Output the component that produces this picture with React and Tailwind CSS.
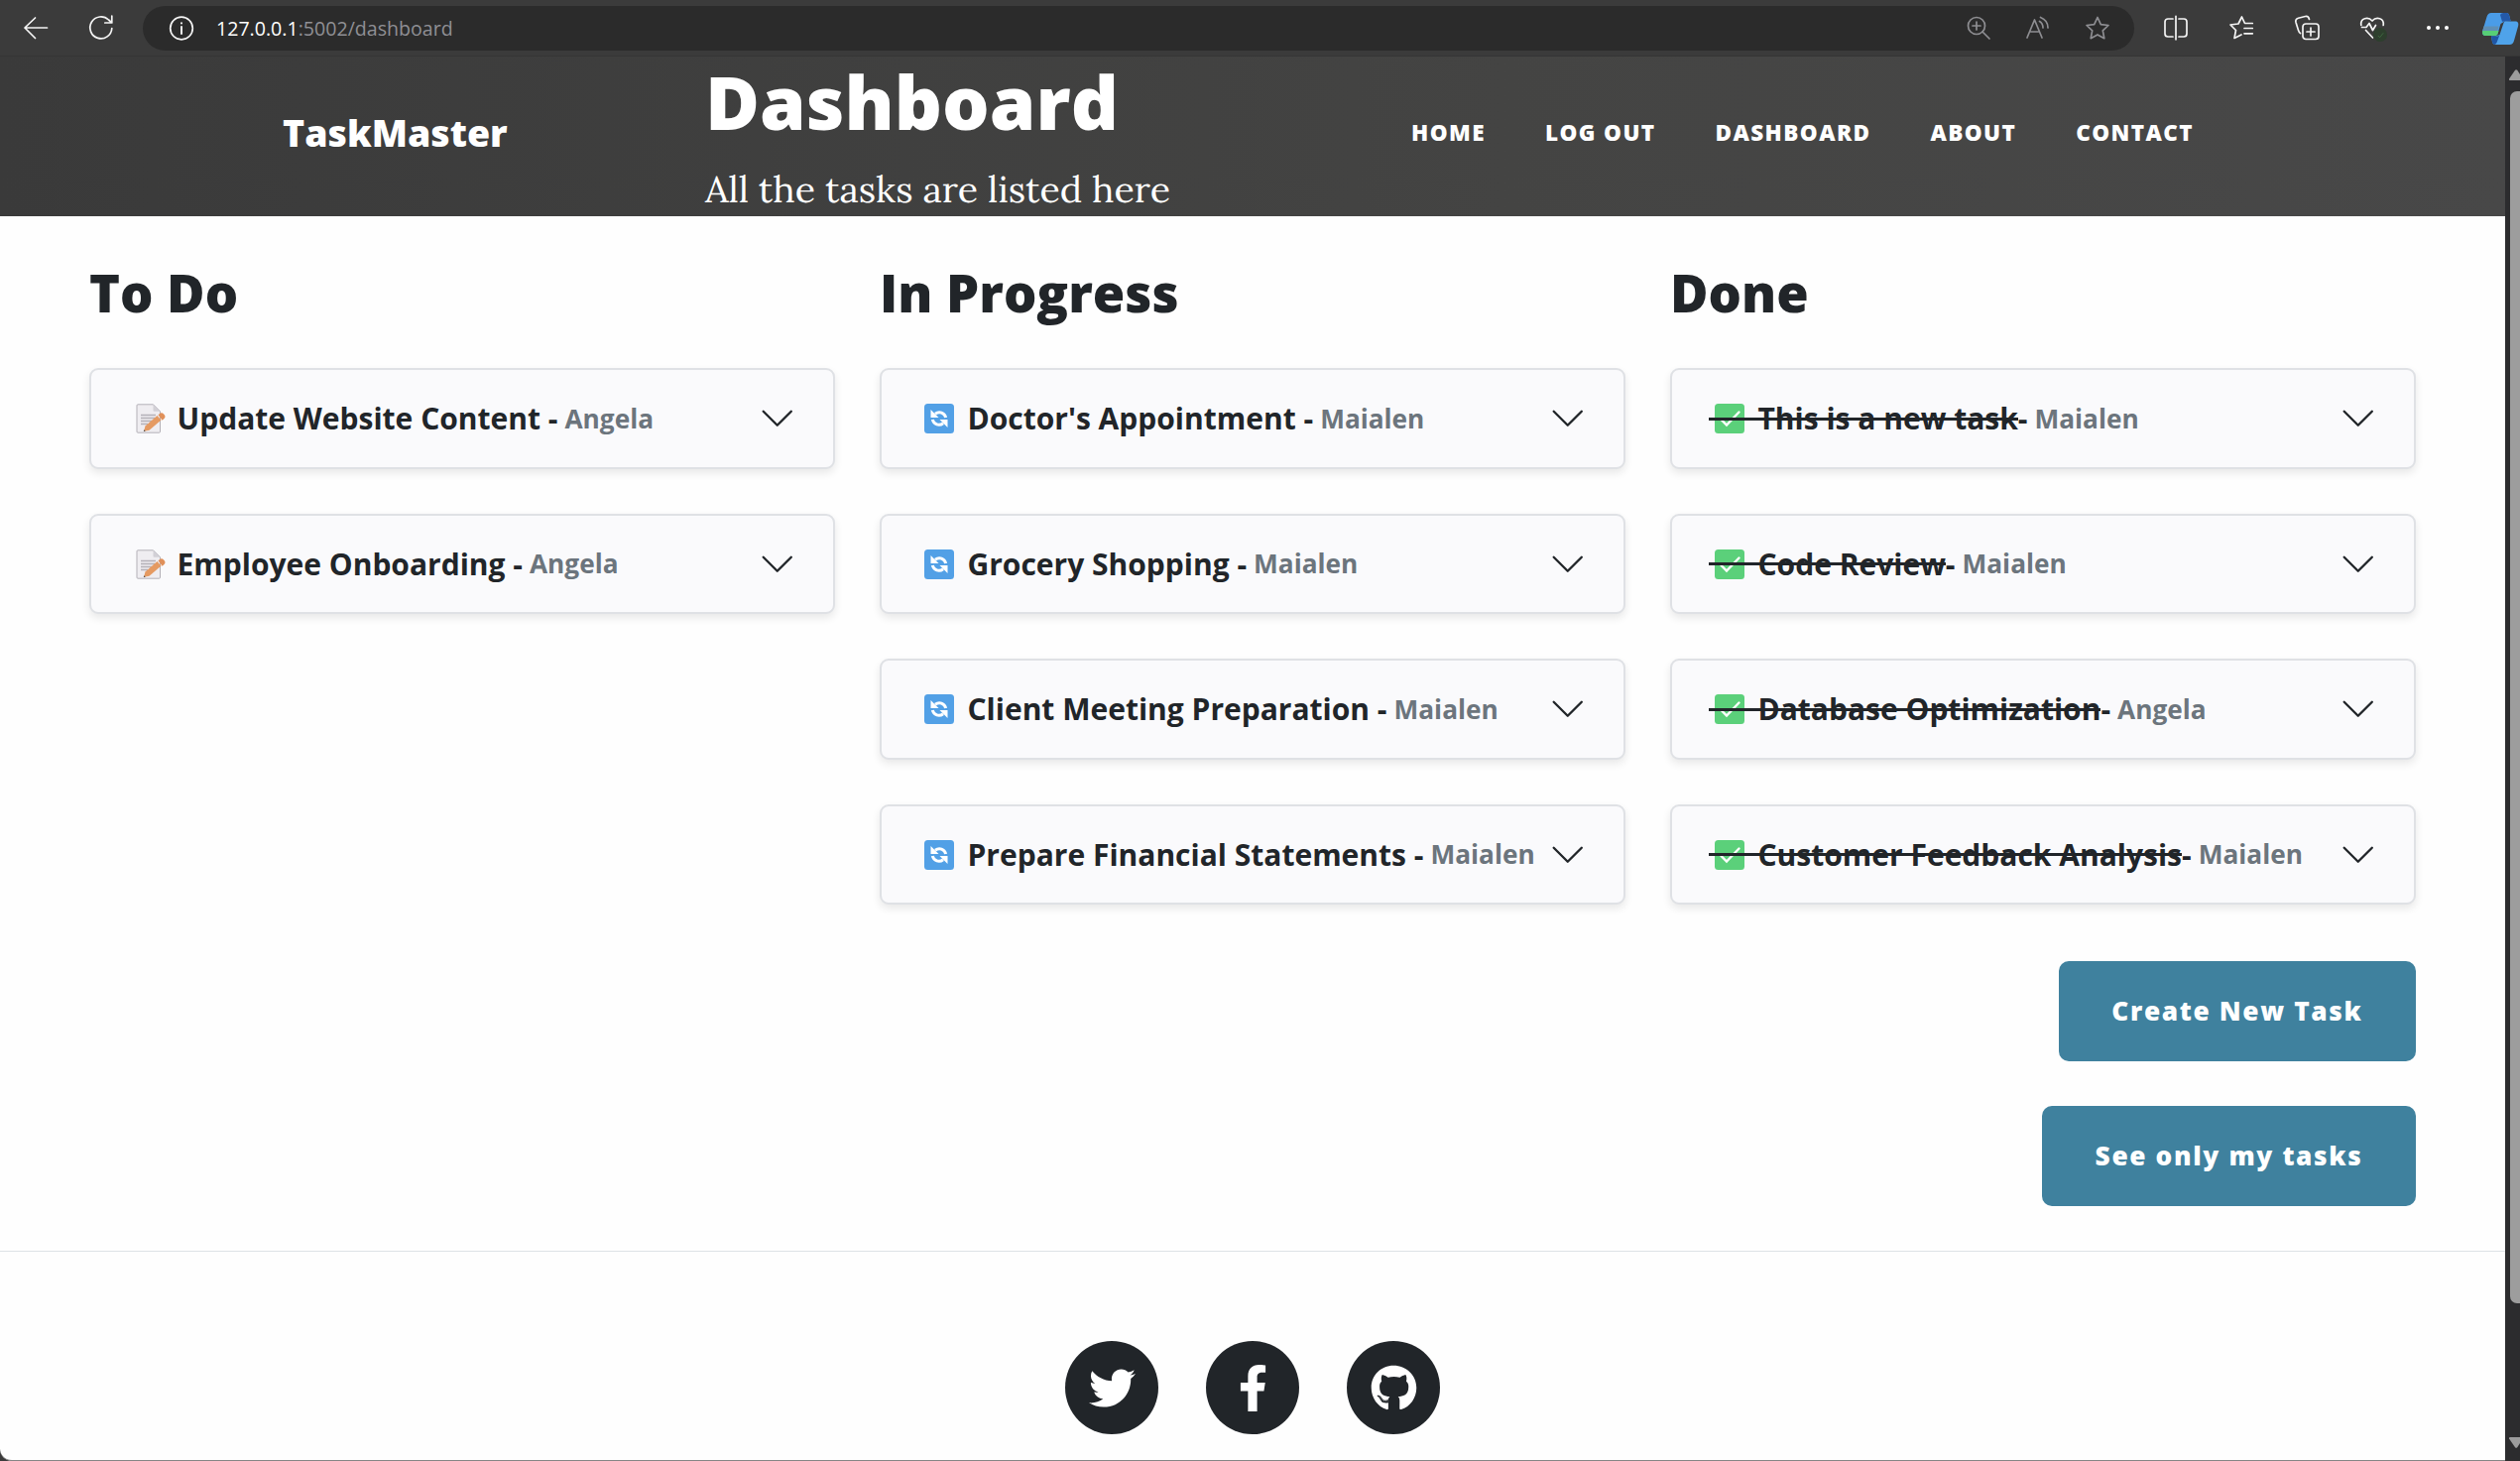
import React from "react";
import { FaTwitter, FaFacebookF, FaGithub } from "react-icons/fa";

const columns = [
  {
    title: "To Do",
    kind: "note",
    tasks: [
      ["Update Website Content", "Angela"],
      ["Employee Onboarding", "Angela"],
    ],
  },
  {
    title: "In Progress",
    kind: "cycle",
    tasks: [
      ["Doctor's Appointment", "Maialen"],
      ["Grocery Shopping", "Maialen"],
      ["Client Meeting Preparation", "Maialen"],
      ["Prepare Financial Statements", "Maialen"],
    ],
  },
  {
    title: "Done",
    kind: "check",
    tasks: [
      ["This is a new task", "Maialen"],
      ["Code Review", "Maialen"],
      ["Database Optimization", "Angela"],
      ["Customer Feedback Analysis", "Maialen"],
    ],
  },
];

function Line({ children, className = "size-6", width = 1.7 }) {
  return (
    <svg
      viewBox="0 0 24 24"
      className={"shrink-0 overflow-visible " + className}
      fill="none"
      stroke="currentColor"
      strokeWidth={width}
      strokeLinecap="round"
      strokeLinejoin="round"
    >
      {children}
    </svg>
  );
}

function NoteIcon() {
  return (
    <svg viewBox="-2 0 30 30" className="size-[30px] overflow-visible">
      <path d="M2 .8h15.500l7 7v20.400a1 1 0 0 1-1 1H2a1 1 0 0 1-1-1V1.800a1 1 0 0 1 1-1z" fill="#efedf1" stroke="#b4b1b8" strokeWidth="1" />
      <path d="M17.500.8v6a1 1 0 0 0 1 1h6z" fill="#d2d0d6" />
      <path d="M5 11.500h15M5 14.500h14M5 17.500h11M5 20.500h7" stroke="#b4b1b8" strokeWidth="1.3" />
      <path d="M9.500 22.500 21.500 12l4 4.500-12 10.200-5.500 1z" fill="#e59a62" />
      <path d="m22.500 11.200 1.300-1a3 3 0 0 1 4.300.3l.5.6a3 3 0 0 1-.3 4.200l-1.700 1.400z" fill="#e0905a" />
      <path d="m8.300 26.300-.5 1.700 1.900-.3z" fill="#444" />
    </svg>
  );
}

function CycleIcon() {
  return (
    <svg viewBox="0 0 30 30" className="size-[30px]">
      <rect width="30" height="30" rx="3.500" fill="#52a0e6" />
      <g fill="none" stroke="#fff" strokeWidth="3">
        <path d="M11 10.300C15 7.200 20.500 9 21.700 14" />
        <path d="M19 19.700C15 22.800 9.500 21 8.300 16" />
      </g>
      <path d="M6.500 6v8h8zM23.500 24v-8h-8z" fill="#fff" />
    </svg>
  );
}

function CheckIcon() {
  return (
    <svg viewBox="0 0 30 30" className="size-[30px]">
      <rect width="30" height="30" rx="3.500" fill="#5bd07a" />
      <path d="m6.500 16 5.500 5.500L24.500 8.500" fill="none" stroke="#fff" strokeWidth="2.400" strokeLinecap="round" />
    </svg>
  );
}

const icons = { note: NoteIcon, cycle: CycleIcon, check: CheckIcon };

function TaskCard({ kind, title, owner }) {
  const Icon = icons[kind];
  const done = kind === "check";
  return (
    <div className="flex h-[101.500px] items-center justify-between rounded-[9px] border-2 border-[#dfe1e5] bg-[#fafafc] px-[37px] shadow-[0_4px_8px_rgba(0,0,0,0.09)]">
      <div className="flex items-center whitespace-nowrap pb-[0.400px] font-bold text-[#212529]">
        <div className="relative flex items-center text-[30px] leading-[45px]">
          <span className="mr-[8.500px] flex w-[41px] justify-center pt-px">
            <Icon />
          </span>
          <span>{title}</span>
          {done && <span className="absolute inset-x-0 top-[21.500px] h-[3px] bg-[#212529]" />}
        </div>
        <span className="text-[30px] leading-[45px]">{done ? "-" : "\u00a0-"}</span>
        <span className="ml-[7px] text-[26.250px] leading-[40px] text-[#6c757d]">{owner}</span>
      </div>
      <svg viewBox="0 0 16 16" className="mr-[0.500px] size-[37.500px] shrink-0" fill="none" stroke="#212529" strokeLinecap="round" strokeLinejoin="round">
        <path d="m2 5 6 6 6-6" />
      </svg>
    </div>
  );
}

function Copilot() {
  return (
    <svg viewBox="0 0 37 33" className="h-[33px] w-[37px] shrink-0">
      <path d="M9 0h15.500c1.500 0 2.300 1.200 2.800 3l1.200 5-6 .5-4 2.500-3 10c-.6 1.500-1.500 2-3 2H3c-2.500 0-3.500-2-2.700-5L4.500 4C5.300 1.500 6.800 0 9 0z" fill="#4a9ce8" />
      <path d="M18 2c.7-1.300 1.800-2 3.300-2h3.200c1.500 0 2.300 1.200 2.800 3l1.300 5.300-8.600.5z" fill="#2459a8" />
      <path d="m1.500 13.500-1.200 4.500h15l1.300-4.500z" fill="#5f8fb5" />
      <path d="M.3 18C-.500 21 .5 23 3 23h9.500c1.500 0 2.400-.5 3-2l1-3z" fill="#57cf76" />
      <path d="M28 8.500h5c3 0 3.800 2 3.200 4.500L32 28c-.8 2.800-2 4-4.500 4H13c-1.500 0-2.500-1-3-2.800L9 23.500h4l4.500-1.500 4-12c.5-1.200 1.500-1.500 2.500-1.500z" fill="#4fa3ea" />
      <path d="M9 23.500h5.500c1.200 0 2-.3 3-1.500l-3 8c-.7 1.300-1.500 2-2.500 2-1-.3-1.600-1.300-2-2.800z" fill="#1f56a5" />
    </svg>
  );
}

function BrowserBar() {
  return (
    <div className="flex h-[57px] shrink-0 items-center border-b border-[#353535] bg-[#3b3b3b] text-[#f4f4f4]">
      <Line className="ml-6 size-6">
        <path d="M1 12h22.500M11.500 2 1 12l10.500 10.500" />
      </Line>
      <Line className="ml-[42px] size-6">
        <path d="M22.800 12.500A11 11 0 1 1 19.500 4l3 2.700M22.800 0v7h-7" />
      </Line>
      <div className="ml-[30px] flex h-[45px] w-[2008px] items-center rounded-full bg-[#2b2b2b] pl-[27px] pr-[25px]">
        <Line>
          <circle cx="12" cy="12.500" r="11.300" />
          <path d="M12 11v7M12 7.300v.2" strokeWidth="2" />
        </Line>
        <span className="ml-[23px] pt-px font-['Open_Sans',sans-serif] text-[19.600px] leading-6 text-[#8f8f94]">
          <span className="text-white">127.0.0.1</span>:5002/dashboard
        </span>
        <div className="ml-auto flex items-center gap-9 text-[#8e8e92]">
          <Line>
            <circle cx="10" cy="10" r="8.500" />
            <path d="M10 6v8M6 10h8M16 16l7 7" />
          </Line>
          <Line>
            <path d="M1 22 8.500 4 16 22M4 16h9M13.500 5.500c2.500 1.500 3.500 4 3.500 6.500M14.500 1.500C19.500 3.500 22 7.500 22 12" />
          </Line>
          <Line>
            <path d="m12 1.500 3.300 7.100 7.700.9-5.700 5.300 1.500 7.900-6.800-3.800-6.800 3.800 1.500-7.900L1 9.500l7.700-.9z" />
          </Line>
        </div>
      </div>
      <div className="ml-[30px] flex items-center gap-[42px]">
        <Line>
          <path d="M9 3H4a3 3 0 0 0-3 3v12a3 3 0 0 0 3 3h5M15 3h5a3 3 0 0 1 3 3v12a3 3 0 0 1-3 3h-5M12 .3v23.500" />
        </Line>
        <Line>
          <path d="M23.300 12.500h-8.300M23.300 7.500h-7.800L12.500 1 9 8l-8 1 5.500 5.500L5 22.500l7-3.500M23.300 17.800h-8.300" />
        </Line>
        <Line>
          <rect x="8" y="8" width="16" height="15.500" rx="3" />
          <path d="M16 12v8M12 16h8M5.500 17.500C4.500 17 4 16 3.500 14.500L1 6.500C.300 4 1.500 3 3.500 2.300l7-1.800c2.500-.5 3.500.5 4 3" />
        </Line>
        <div className="relative">
          <Line>
            <path d="M.8 9.500C-.300 2 8 .500 12 5c4-4.500 12.300-3 11.200 4.500M1.500 11.500h4.500l3-4 3.500 7 3-5M5.500 14.500l7 7.500" />
          </Line>
          <span className="absolute left-[13px] top-[12px] flex size-[14px] items-center justify-center rounded-full bg-[#2d3f2d]">
            <svg viewBox="0 0 10 10" className="size-[9px]" fill="none" stroke="#3f6a40">
              <path d="m2 5.500 2 2 4-5" />
            </svg>
          </span>
        </div>
        <div className="flex w-6 items-center justify-center gap-[5px]">
          <span className="size-1 shrink-0 rounded-full bg-white" />
          <span className="size-1 shrink-0 rounded-full bg-white" />
          <span className="size-1 shrink-0 rounded-full bg-white" />
        </div>
      </div>
      <div className="ml-[33px] pt-[2px]">
        <Copilot />
      </div>
    </div>
  );
}

function Header() {
  return (
    <header className="flex h-[161px] items-start bg-linear-to-r from-[#3a3a3a] via-[#444443] via-60% to-[#484848] text-white">
      <div className="ml-[285px] mt-[51px] w-[426px] text-[37.500px] font-extrabold leading-[52px]">TaskMaster</div>
      <div className="w-[712px]">
        <h1 className="text-[75px] font-extrabold leading-[91px]">Dashboard</h1>
        <p className="mt-[15px] font-['Lora',serif] text-[37.500px] leading-[55px]">All the tasks are listed here</p>
      </div>
      <nav className="mt-[60px] flex gap-[60px] whitespace-nowrap text-[22.500px] font-extrabold leading-[34px] tracking-[0.0625em]">
        <span>HOME</span>
        <span>LOG OUT</span>
        <span>DASHBOARD</span>
        <span>ABOUT</span>
        <span>CONTACT</span>
      </nav>
    </header>
  );
}

function SocialLink({ children }) {
  return <span className="flex size-[94px] items-center justify-center rounded-full bg-[#212529] text-[47px] text-white">{children}</span>;
}

export default function App() {
  return (
    <div className="flex h-[1473px] w-[2541px] flex-col overflow-hidden bg-[#3b3b3b] font-['Open_Sans',sans-serif]">
      <BrowserBar />
      <div className="flex min-h-0 flex-1">
        <div className="flex w-[2526px] flex-col overflow-hidden rounded-bl-[12px] border-b border-[#858585] bg-[#fefefe]">
          <Header />
          <main className="px-[90px] pt-[48px]">
            <div className="grid grid-cols-3 gap-x-[45px]">
              {columns.map((col) => (
                <section key={col.title}>
                  <h2 className="mb-[47px] text-[52.500px] font-extrabold leading-[58px] text-[#212529]">{col.title}</h2>
                  <div className="flex flex-col gap-[45px]">
                    {col.tasks.map(([title, owner]) => (
                      <TaskCard key={title} kind={col.kind} title={title} owner={owner} />
                    ))}
                  </div>
                </section>
              ))}
            </div>
            <div className="mt-[57px] flex flex-col items-end gap-[45px] text-[26.250px] font-extrabold leading-[39px] tracking-[0.0625em] text-white">
              <button className="h-[101px] rounded-[10px] bg-[#3f819e] px-[53.500px]">Create New Task</button>
              <button className="h-[101px] rounded-[10px] bg-[#3f819e] px-[53.500px]">See only my tasks</button>
            </div>
          </main>
          <footer className="mt-[45px] flex justify-center gap-[48px] border-t border-[#dee2e6] pt-[90px]">
            <SocialLink>
              <FaTwitter />
            </SocialLink>
            <SocialLink>
              <FaFacebookF />
            </SocialLink>
            <SocialLink>
              <FaGithub />
            </SocialLink>
          </footer>
        </div>
        <div className="flex w-[15px] flex-col items-end overflow-hidden bg-[#2c2c2e]">
          <svg viewBox="0 0 10 11" className="mt-[13px] h-[11px] w-[11px] shrink-0" preserveAspectRatio="none">
            <path d="M0 9.500 5.500.8Q6.500-.500 7.500.8L10 5v6H1Q-.300 11 0 9.500z" fill="#9c9c9c" />
          </svg>
          <div className="mt-[11px] h-[1222px] w-[10px] shrink-0 rounded-l-[7px] bg-[#9d9d9d]" />
          <svg viewBox="0 0 10 11" className="mt-[135px] h-[11px] w-[11px] shrink-0" preserveAspectRatio="none">
            <path d="M0 1.500 5.500 10.200Q6.500 11.500 7.500 10.200L10 6V0H1Q-.300 0 0 1.500z" fill="#9c9c9c" />
          </svg>
        </div>
      </div>
    </div>
  );
}
